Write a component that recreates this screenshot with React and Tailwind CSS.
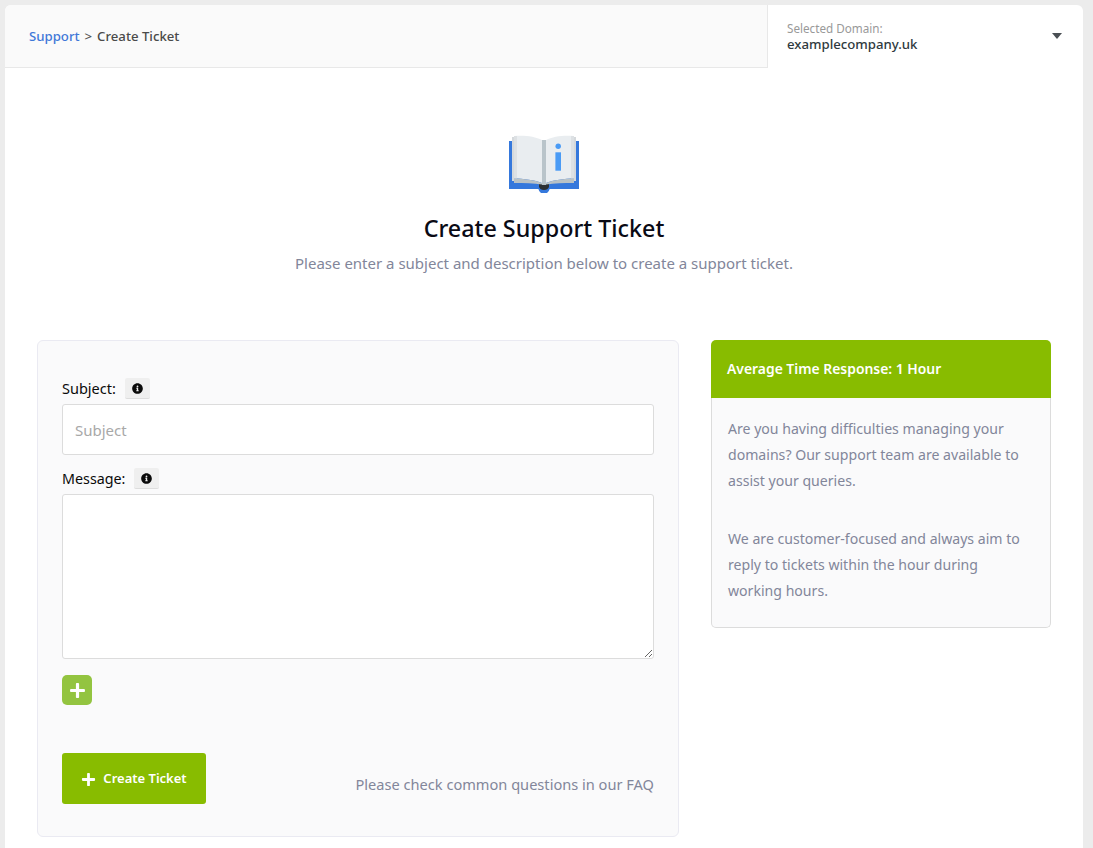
import React from "react";
import { FaInfoCircle, FaPlus } from "react-icons/fa";

const BookIcon = () => (
  <svg width="70" height="58" viewBox="0 -1 70 58" className="block">
    <rect x="0" y="5" width="70" height="48" fill="#3578dc" />
    <path d="M29 52h12l-1 2.5a5.5 5.5 0 0 1-10 0z" fill="#3578dc" />
    <path d="M30 48h10v2.5a5 3.5 0 0 1-10 0z" fill="#2c3033" />
    <path d="M3 1h2v44H3zM65 1h2v44h-2z" fill="#d5d9dc" />
    <path d="M5 0C14-1 26 0 33 4V47C26 44 14 42.5 5 42.5Z" fill="#e9edf0" />
    <path d="M65 0C56-1 44 0 37 4V47C44 44 56 42.5 65 42.5Z" fill="#e9edf0" />
    <path d="M5 0h3v42.5H5zM62 0h3v42.5h-3z" fill="#dde1e4" />
    <path d="M5 42.5C14 42.5 26 44 33 47V48.5C25 47 15 47 5 47Z" fill="#b9c2c6" />
    <path d="M65 42.5C56 42.5 44 44 37 47V48.5C45 47 55 47 65 47Z" fill="#b9c2c6" />
    <rect x="33" y="4" width="4" height="45" fill="#b9c4ca" />
    <circle cx="49.2" cy="10.3" r="2.7" fill="#4a9bf5" />
    <rect x="46.4" y="16.3" width="5.6" height="18.4" fill="#4a9bf5" />
  </svg>
);

const InfoButton = () => (
  <span className="flex h-[21px] w-[25px] items-center justify-center rounded-[2px] border-b border-[#dddddd] bg-[#efefef] text-[11px] text-[#0a0a0a]">
    <FaInfoCircle />
  </span>
);

const App = () => {
  return (
    <div className="h-[848px] overflow-hidden bg-[#ececec] pl-[5px] pr-[10px] pt-[5px] font-['Noto_Sans','Open_Sans',sans-serif]">
      <div className="h-[900px] overflow-hidden rounded-t-[6px] bg-white">
        <div className="flex h-[63px]">
          <div className="flex flex-1 items-center border-b border-r border-[#e8e8e8] bg-[#fafafa] pl-[24px] pt-[1px] text-[13.2px] font-medium">
            <span className="text-[#3f78d8]">Support</span>
            <span className="mx-[5px] text-[#555555]">&gt;</span>
            <span className="text-[#4a4a4a]">Create Ticket</span>
          </div>
          <div className="flex w-[315px] items-center justify-between pl-[19px] pr-[21px]">
            <div className="flex flex-col">
              <span className="text-[11.7px] leading-[15px] text-[#999999]">Selected Domain:</span>
              <span className="text-[13.2px] font-medium leading-[17px] text-[#2f3a40]">examplecompany.uk</span>
            </div>
            <svg width="10" height="6" viewBox="0 0 10 6" className="mt-[-1px] block">
              <path d="M0 0h10L5 6z" fill="#4a4f54" />
            </svg>
          </div>
        </div>

        <div className="flex flex-col items-center pt-[67px]">
          <BookIcon />
          <h1 className="mt-[19px] text-[23.3px] font-medium leading-[32px] text-[#0a0a14]">Create Support Ticket</h1>
          <p className="mb-[1px] mt-[9px] text-[15px] leading-[20px] text-[#82869a]">
            Please enter a subject and description below to create a support ticket.
          </p>
        </div>

        <div className="mt-[66px] flex items-start gap-[32px] px-[32px]">
          <div className="h-[497px] w-[642px] rounded-[6px] border border-[#eaeaf2] bg-[#fafafb] px-[24px] pt-[37px]">
            <div className="flex h-[21px] items-center gap-[9px] text-[14.5px] text-[#0a0a0a]">
              <span>Subject:</span>
              <InfoButton />
            </div>
            <div className="mt-[5px] flex h-[51px] items-center rounded-[3px] border border-[#dcdcdc] bg-white px-[12px] pt-[1px] text-[15px] text-[#a8a8a8]">
              Subject
            </div>
            <div className="mt-[13px] flex h-[21px] items-center gap-[9px] text-[14.3px] text-[#0a0a0a]">
              <span>Message:</span>
              <InfoButton />
            </div>
            <textarea className="mt-[5px] block h-[165px] w-full rounded-[3px] border border-[#dcdcdc] bg-white" />
            <button className="mt-[16px] flex h-[30px] w-[30px] items-center justify-center rounded-[5px] bg-[#93c440] text-[17px] text-white">
              <FaPlus />
            </button>
            <div className="mt-[48px] flex items-end justify-between">
              <button className="flex h-[51px] w-[144px] items-center justify-center gap-[7px] rounded-[3px] bg-[#88bc00] pt-[1px] text-[13px] font-semibold text-white">
                <FaPlus className="text-[15px]" />
                Create Ticket
              </button>
              <span className="mb-[10px] text-[14.6px] leading-[20px] text-[#82869a]">
                Please check common questions in our FAQ
              </span>
            </div>
          </div>

          <div className="w-[340px]">
            <div className="flex h-[58px] items-center rounded-t-[5px] bg-[#88bc00] px-[16px] pt-[1px] text-[13.9px] font-semibold text-white">
              Average Time Response: 1 Hour
            </div>
            <div className="h-[230px] rounded-b-[5px] border border-t-0 border-[#dcdcdc] bg-[#fafafb] pl-[16px] pr-[28px] pt-[18px] text-[14.1px] leading-[26px] text-[#82869a]">
              <p>Are you having difficulties managing your domains? Our support team are available to assist your queries.</p>
              <p className="mt-[32px]">We are customer-focused and always aim to reply to tickets within the hour during working hours.</p>
            </div>
          </div>
        </div>
      </div>
    </div>
  );
};

export default App;
